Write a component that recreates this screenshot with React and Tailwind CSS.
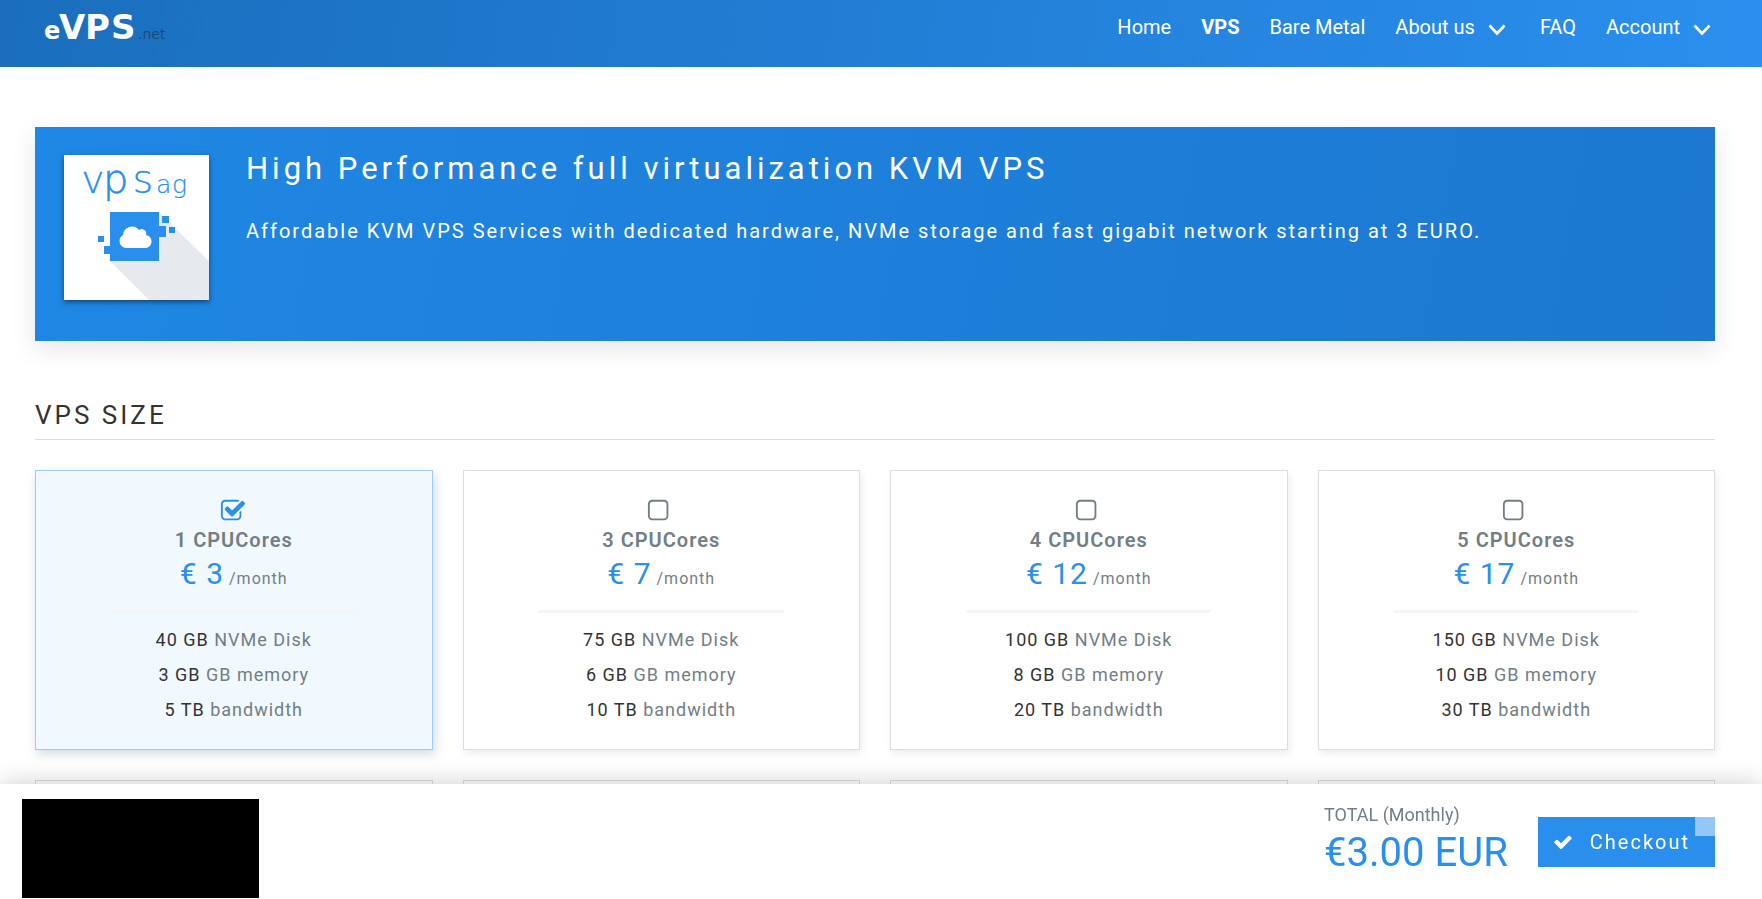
import React, { useState } from "react";

const navLinks = [
  { name: "Home" },
  { name: "VPS", active: true },
  { name: "Bare Metal" },
  { name: "About us", menu: true },
  { name: "FAQ" },
  { name: "Account", menu: true },
];

const plans = [
  { id: 1, cores: 1, price: 3, disk: "40 GB", memory: "3 GB", traffic: "5 TB" },
  { id: 2, cores: 3, price: 7, disk: "75 GB", memory: "6 GB", traffic: "10 TB" },
  { id: 3, cores: 4, price: 12, disk: "100 GB", memory: "8 GB", traffic: "20 TB" },
  { id: 4, cores: 5, price: 17, disk: "150 GB", memory: "10 GB", traffic: "30 TB" },
];

function Logo() {
  return (
    <svg width="130" height="50" viewBox="0 0 130 50" role="img" aria-label="eVPS.net">
      <g fill="#fff" fontFamily="DejaVu Sans" fontWeight="700">
        <text x="0" y="36" fontSize="24">e</text>
        <text x="15 41 67" y="36" fontSize="34">VPS</text>
      </g>
      <text x="94" y="36" fill="#1c4a78" fontFamily="DejaVu Sans" fontSize="14">.net</text>
    </svg>
  );
}

function ProductLogo() {
  return (
    <svg
      className="size-[145px] shrink-0 bg-white shadow-[0_2px_5px_rgba(0,0,0,0.5)]"
      viewBox="0 0 145 145"
      role="img"
      aria-label="VPSag"
    >
      <path d="M95 57 105 67 111 73 145 106V145H85L46 106Z" fill="#e6eaee" />
      <g
        fill="#2a8fec"
        stroke="#2a8fec"
        strokeWidth="0.6"
        fontFamily="DejaVu Sans"
        fontWeight="200"
      >
        <text x="19" y="38" fontSize="29">V</text>
        <text x="39" y="38" fontSize="40">p</text>
        <text x="69" y="38" fontSize="31">S</text>
        <text x="92 108" y="38" fontSize="25" strokeWidth="0.2">ag</text>
      </g>
      <g fill="#2a8fec">
        <path d="M46 57H95V71H102V82H95V106H46V99H40V91H46Z" />
        <rect x="98" y="61" width="7" height="7" />
        <rect x="105" y="72" width="6" height="6" />
        <rect x="34" y="81" width="6" height="6" />
      </g>
      <path
        d="M62 93A7 7 0 0 1 59 80A9 9 0 0 1 75 75A4.500 4.500 0 0 1 82 80A6.500 6.500 0 0 1 80 93Z"
        fill="#fff"
      />
    </svg>
  );
}

function ChevronIcon() {
  return (
    <svg
      className="mt-[6px]"
      width="18"
      height="12"
      viewBox="0 0 18 12"
      fill="none"
      stroke="#fff"
      strokeWidth="2.6"
    >
      <path d="M1.500 1.500 9 9.500 16.500 1.500" />
    </svg>
  );
}

function TickBoxIcon({ checked }) {
  return (
    <svg width="26" height="26" viewBox="0 0 1792 1792" fill="currentColor">
      {checked ? (
        <path d="M1472 930v318q0 119-84.5 203.5t-203.5 84.5h-832q-119 0-203.5-84.5t-84.5-203.5v-832q0-119 84.5-203.5t203.5-84.5h832q63 0 117 25 15 7 18 23 3 17-9 29l-49 49q-10 10-23 10-3 0-9-2-23-6-45-6h-832q-66 0-113 47t-47 113v832q0 66 47 113t113 47h832q66 0 113-47t47-113v-254q0-13 9-22l64-64q10-10 23-10 6 0 12 3 20 8 20 29zm231-489l-814 814q-24 24-57 24t-57-24l-430-430q-24-24-24-57t24-57l110-110q24-24 57-24t57 24l263 263 647-647q24-24 57-24t57 24l110 110q24 24 24 57t-24 57z" />
      ) : (
        <path d="M1184 256h-832q-66 0-113 47t-47 113v832q0 66 47 113t113 47h832q66 0 113-47t47-113v-832q0-66-47-113t-113-47zm288 160v832q0 119-84.5 203.5t-203.5 84.5h-832q-119 0-203.5-84.5t-84.5-203.5v-832q0-119 84.5-203.5t203.5-84.5h832q119 0 203.5 84.5t84.5 203.5z" />
      )}
    </svg>
  );
}

function CheckIcon() {
  return (
    <svg width="20" height="20" viewBox="0 0 1792 1792" fill="currentColor">
      <path d="M1671 566q0 40-28 68l-724 724-136 136q-28 28-68 28t-68-28l-136-136-362-362q-28-28-28-68t28-68l136-136q28-28 68-28t68 28l294 295 656-657q28-28 68-28t68 28l136 136q28 28 28 68z" />
    </svg>
  );
}

function PlanCard({ plan, checked, onSelect }) {
  return (
    <label
      className={
        checked
          ? "relative flex cursor-pointer flex-col items-center border border-[#a0caee] bg-[#f1f8fe] pt-[27px] pb-[22px] tracking-[1px] text-[#727e86] shadow-[2px_4px_10px_rgba(30,90,120,0.22)]"
          : "relative flex cursor-pointer flex-col items-center border border-[#dcdcdc] bg-white pt-[27px] pb-[22px] tracking-[1px] text-[#727e86] shadow-[2px_4px_8px_rgba(0,0,0,0.07)]"
      }
    >
      <input
        type="checkbox"
        checked={checked}
        onChange={onSelect}
        className="absolute inset-0 cursor-pointer appearance-none"
      />
      <span className={checked ? "pr-[2px] text-[#2a8fec]" : "pr-[2px]"}>
        <TickBoxIcon checked={checked} />
      </span>
      <span className="text-xl leading-8 font-semibold">{plan.cores} CPUCores</span>
      <span className="text-base leading-9">
        <span className="text-3xl leading-9 text-[#2a8fec]">€ {plan.price}</span> /month
      </span>
      <span className="mt-[13px] mb-[9px] h-[3px] w-[62%] bg-[#f5f5f5]" />
      <span className="text-lg leading-[35px]">
        <span className="text-[#333]">{plan.disk}</span> NVMe Disk
      </span>
      <span className="text-lg leading-[35px]">
        <span className="text-[#333]">{plan.memory}</span> GB memory
      </span>
      <span className="text-lg leading-[35px]">
        <span className="text-[#333]">{plan.traffic}</span> bandwidth
      </span>
    </label>
  );
}

function App() {
  const [selected, setSelected] = useState(1);
  const current = plans.find((plan) => plan.id === selected);

  return (
    <div className="h-screen overflow-hidden bg-white font-['Roboto',sans-serif]">
      <header className="flex h-[67px] items-start justify-between bg-linear-[100deg,#1a6ebd,#2a8fee] pr-[47px] pl-11">
        <a href="#" className="pt-[3px]">
          <Logo />
        </a>
        <nav className="flex gap-[30px] pt-3">
          {navLinks.map((link) => (
            <a
              key={link.name}
              href="#"
              className={
                link.active
                  ? "flex items-center text-xl leading-[30px] font-bold text-white"
                  : link.menu
                    ? "flex items-center gap-[13px] pr-1 text-xl leading-[30px] text-white"
                    : "flex items-center text-xl leading-[30px] text-white"
              }
            >
              {link.name}
              {link.menu && <ChevronIcon />}
            </a>
          ))}
        </nav>
      </header>

      <main className="pt-[60px] pr-[47px] pl-[35px]">
        <section className="flex gap-[37px] bg-linear-[100deg,#1f87e4,#1c78d0] px-[29px] pt-7 pb-[41px] text-white shadow-[0_8px_24px_rgba(0,0,0,0.1)]">
          <ProductLogo />
          <div>
            <h1 className="text-[31px] leading-[28px] tracking-[4px]">
              High Performance full virtualization KVM VPS
            </h1>
            <p className="mt-[34px] text-xl leading-[28px] tracking-[2px]">
              Affordable KVM VPS Services with dedicated hardware, NVMe storage and fast gigabit
              network starting at 3 EURO.
            </p>
          </div>
        </section>

        <h2 className="mt-[54px] border-b border-[#dcdcdc] pb-1 text-[26px] leading-10 tracking-[3px] text-[#333]">
          VPS SIZE
        </h2>

        <div className="mt-[30px] grid grid-cols-4 gap-[30px]">
          {plans.map((plan) => (
            <PlanCard
              key={plan.id}
              plan={plan}
              checked={plan.id === selected}
              onSelect={() => setSelected(plan.id)}
            />
          ))}
          {/* second row starts under the checkout bar */}
          {plans.map((plan) => (
            <div key={plan.id} className="h-10 border border-[#dcdcdc] bg-white" />
          ))}
        </div>
      </main>

      <footer className="fixed inset-x-0 bottom-0 flex h-[115px] items-start justify-between bg-white pt-[15px] pr-[47px] pl-[22px] shadow-[0_0_24px_rgba(0,0,0,0.2)]">
        <div className="h-[99px] w-[237px] bg-black" />
        <div className="flex items-start gap-[30px]">
          <div>
            <p className="text-lg leading-8 text-[#727e86]">TOTAL (Monthly)</p>
            <p className="text-[40px] leading-[44px] text-[#2a8fec]">€{current.price}.00 EUR</p>
          </div>
          <button
            type="button"
            className="relative mt-[18px] flex h-[50px] items-center gap-[17px] bg-[#2a8fec] pr-[25px] pl-[15px] text-xl tracking-[2px] text-white"
          >
            <CheckIcon />
            Checkout
            <span className="absolute top-0 right-0 h-[19px] w-5 bg-[#94c6f6]" />
          </button>
        </div>
      </footer>
    </div>
  );
}

export default App;
